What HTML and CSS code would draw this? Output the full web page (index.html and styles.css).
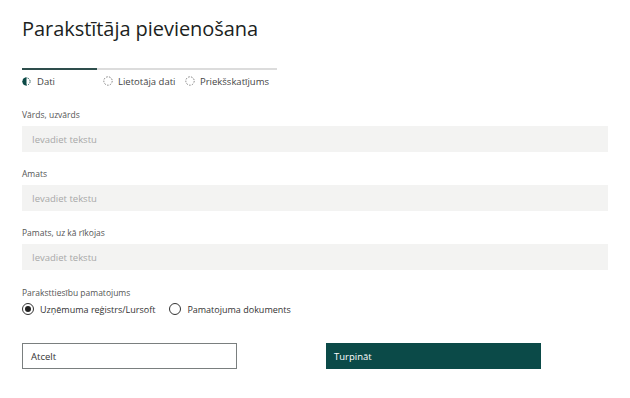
FILE: index.html
```html
<!DOCTYPE html>
<html lang="lv">
<head>
<meta charset="utf-8">
<title>Parakstītāja pievienošana</title>
<link rel="stylesheet" href="styles.css">
</head>
<body>
<div class="page">
  <h1 class="title">Parakstītāja pievienošana</h1>

  <div class="stepper">
    <div class="step step-active">
      <svg class="step-icon" viewBox="0 0 10 10" width="9" height="9">
        <path d="M5 0.5 A4.5 4.5 0 0 0 5 9.5 Z" fill="#0d4a47"/>
        <circle cx="5" cy="5" r="4" fill="none" stroke="#0d4a47" stroke-width="1" stroke-dasharray="1.6 1.2"/>
      </svg>
      <span>Dati</span>
    </div>
    <div class="step step-2">
      <svg class="step-icon" viewBox="0 0 10 10" width="10" height="10">
        <circle cx="5" cy="5" r="4.2" fill="none" stroke="#777" stroke-width="0.9" stroke-dasharray="1.6 1.3"/>
      </svg>
      <span>Lietotāja dati</span>
    </div>
    <div class="step step-3">
      <svg class="step-icon" viewBox="0 0 10 10" width="10" height="10">
        <circle cx="5" cy="5" r="4.2" fill="none" stroke="#777" stroke-width="0.9" stroke-dasharray="1.6 1.3"/>
      </svg>
      <span>Priekšskatījums</span>
    </div>
  </div>

  <div class="field">
    <label class="label">Vārds, uzvārds</label>
    <div class="input">Ievadiet tekstu</div>
  </div>
  <div class="field">
    <label class="label">Amats</label>
    <div class="input">Ievadiet tekstu</div>
  </div>
  <div class="field">
    <label class="label">Pamats, uz kā rīkojas</label>
    <div class="input">Ievadiet tekstu</div>
  </div>

  <div class="radio-group">
    <div class="label">Paraksttiesību pamatojums</div>
    <div class="radios">
      <div class="radio"><span class="dot dot-on"></span><span>Uzņēmuma reģistrs/Lursoft</span></div>
      <div class="radio"><span class="dot"></span><span>Pamatojuma dokuments</span></div>
    </div>
  </div>

  <div class="buttons">
    <div class="btn btn-secondary">Atcelt</div>
    <div class="btn btn-primary">Turpināt</div>
  </div>
</div>
</body>
</html>
```

FILE: styles.css
```css
* { box-sizing: border-box; }
html, body { margin: 0; padding: 0; background: #fff; }
body {
  font-family: "Open Sans", "Noto Sans", "Liberation Sans", sans-serif;
  color: #323130;
}
.page {
  width: 630px;
  padding: 13px 22px 0 22px;
}
.title {
  margin: 0;
  font-weight: 400;
  font-size: 20px;
  line-height: 32px;
  color: #201f1e;
  letter-spacing: -0.05px;
}
.stepper {
  display: flex;
  width: 255px;
  margin-top: 23px;
  border-top: 2px solid #dcdcdc;
}
.step {
  display: flex;
  align-items: center;
  gap: 6px;
  height: 24px;
  margin-top: -2px;
  border-top: 2px solid transparent;
  font-size: 9.5px;
  color: #444;
}
.step-active { width: 75px; border-top-color: #2e4e4c; }
.step-2 { width: 83px; padding-left: 6px; gap: 5px; }
.step-3 { padding-left: 5px; gap: 5px; }
.step-icon { flex: none; display: block; }

.field { margin-top: 16px; }
.stepper + .field { margin-top: 17px; }
.label {
  display: block;
  font-size: 8.5px;
  line-height: 12px;
  color: #555;
}
.input {
  margin-top: 5px;
  height: 26px;
  background: #f3f3f2;
  padding-left: 10px;
  display: flex;
  align-items: center;
  font-size: 9.5px;
  color: #a8a8a8;
}
.radio-group { margin-top: 17px; }
.radios {
  display: flex;
  gap: 14px;
  margin-top: 2px;
  font-size: 9px;
  color: #333;
}
.radio {
  display: flex;
  align-items: center;
  gap: 6px;
  height: 16px;
}
.dot {
  width: 12px;
  height: 12px;
  border: 1px solid #333;
  border-radius: 50%;
  position: relative;
  flex: none;
}
.dot-on::after {
  content: "";
  position: absolute;
  left: 2px;
  top: 2px;
  width: 6px;
  height: 6px;
  border-radius: 50%;
  background: #222;
}
.buttons {
  display: flex;
  gap: 89px;
  margin-top: 26px;
}
.btn {
  width: 215px;
  height: 26px;
  display: flex;
  align-items: center;
  padding-left: 8px;
  font-size: 9.5px;
}
.btn-secondary {
  border: 1px solid #7a7f7f;
  color: #333;
  background: #fff;
}
.btn-primary {
  background: #0b4a48;
  color: #fff;
}
```
